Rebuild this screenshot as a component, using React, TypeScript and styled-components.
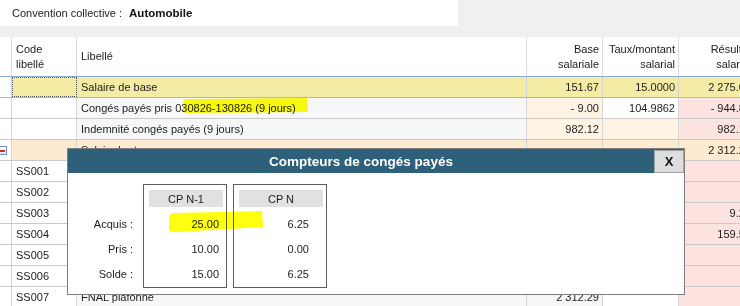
import styled, { createGlobalStyle } from 'styled-components';

const GlobalStyle = createGlobalStyle`
  html, body {
    margin: 0;
    padding: 0;
    background: #f0f0f0;
  }
  * {
    box-sizing: border-box;
  }
`;

const FONT = `"Liberation Sans", Arial, sans-serif`;
const COLS = '12px 65px 450px 76px 76px 76px';

const C = {
  white: '#ffffff',
  label: '#f7f7f7',
  selected: '#f4eca5',
  total: '#fdebd1',
  peach: '#fff4e3',
  pink: '#fde3df',
  light: '#f6f6f6',
};

type Row = {
  code?: string;
  label?: string;
  base?: string;
  taux?: string;
  res?: string;
  kind?: 'selected' | 'total';
  bg?: string[];
  toggle?: boolean;
};

const ssBg = [C.white, C.white, C.label, C.light, C.white, C.pink];

const rows: Row[] = [
  { label: 'Salaire de base', base: '151.67', taux: '15.0000', res: '2 275.05', kind: 'selected' },
  {
    label: 'Congés payés pris 030826-130826 (9 jours)',
    base: '- 9.00',
    taux: '104.9862',
    res: '- 944.88',
    bg: [C.white, C.white, C.label, C.peach, C.white, C.pink],
  },
  {
    label: 'Indemnité congés payés (9 jours)',
    base: '982.12',
    res: '982.12',
    bg: [C.white, C.white, C.label, C.peach, C.peach, C.pink],
  },
  { label: 'Salaire brut', res: '2 312.29', kind: 'total', toggle: true },
  { code: 'SS001', label: 'Sécurité sociale plafonnée', bg: ssBg },
  { code: 'SS002', label: 'Sécurité sociale déplafonnée', bg: ssBg },
  { code: 'SS003', label: 'Complémentaire santé', res: '9.25', bg: ssBg },
  { code: 'SS004', label: 'Retraite complémentaire', res: '159.54', bg: ssBg },
  { code: 'SS005', label: 'Prévoyance', bg: ssBg },
  { code: 'SS006', label: 'Assurance chômage', bg: ssBg },
  { code: 'SS007', label: 'FNAL plafonné', base: '2 312.29', bg: ssBg },
];

const Page = styled.div`
  position: relative;
  width: 740px;
  height: 306px;
  overflow: hidden;
  background: #f0f0f0;
  font-family: ${FONT};
  font-size: 11px;
  color: #1c1c1c;
`;

const TopBar = styled.div`
  width: 458px;
  height: 26px;
  background: #fff;
  display: flex;
  align-items: center;
  gap: 7px;
  padding-left: 12px;
`;

const ConvLabel = styled.span`
  color: #222;
`;

const ConvValue = styled.span`
  font-weight: bold;
  font-size: 11.5px;
  color: #111;
`;

const Table = styled.div`
  margin-top: 11px;
  width: 755px;
`;

const HeaderRow = styled.div`
  display: grid;
  grid-template-columns: ${COLS};
  height: 40px;
  background: #fff;
  border-bottom: 1px solid #8eaad6;
`;

const HeadCell = styled.div<{ $right?: boolean }>`
  display: flex;
  flex-direction: column;
  justify-content: center;
  align-items: ${p => (p.$right ? 'flex-end' : 'flex-start')};
  padding: 0 3px 0 4px;
  border-right: 1px solid #dcdcdc;
  line-height: 15px;
  white-space: nowrap;
`;

const BodyRow = styled.div<{ $kind?: string }>`
  display: grid;
  grid-template-columns: ${COLS};
  height: 21px;
  border-bottom: 1px solid ${p => (p.$kind === 'selected' ? '#a9b8cf' : '#cacaca')};
`;

const Cell = styled.div<{ $bg: string; $right?: boolean; $focus?: boolean }>`
  display: flex;
  align-items: center;
  justify-content: ${p => (p.$right ? 'flex-end' : 'flex-start')};
  padding: 0 3px 0 4px;
  background: ${p => p.$bg};
  border-right: 1px solid #d6d6d6;
  white-space: nowrap;
  overflow: hidden;
  outline: ${p => (p.$focus ? '1px dotted #555' : 'none')};
  outline-offset: -1px;
`;

const GutterCell = styled.div`
  display: flex;
  align-items: center;
  background: #fff;
  border-right: 1px solid #d6d6d6;
  overflow: hidden;
`;

const Toggle = styled.span`
  flex: none;
  position: relative;
  width: 9px;
  height: 9px;
  margin-left: -2px;
  border: 1px solid #6e8fc6;
  background: linear-gradient(#ffffff, #dfe6f2);

  &::after {
    content: '';
    position: absolute;
    left: 1px;
    right: 1px;
    top: 3px;
    height: 2px;
    background: #d8262a;
  }
`;

const Dialog = styled.div`
  position: absolute;
  left: 67px;
  top: 148px;
  width: 618px;
  height: 147px;
  background: #fff;
  border: 1px solid #7d7d7d;
  display: flex;
  flex-direction: column;
`;

const TitleBar = styled.div`
  height: 24px;
  background: #2e6079;
  display: flex;
  align-items: center;
`;

const Title = styled.div`
  flex: 1;
  text-align: center;
  color: #fff;
  font-weight: bold;
  font-size: 13.5px;
`;

const CloseButton = styled.button`
  width: 30px;
  height: 23px;
  padding: 0;
  background: #dedede;
  border: 1px solid #a3a3a3;
  font-family: ${FONT};
  font-weight: bold;
  font-size: 13px;
  color: #111;
`;

const DialogBody = styled.div`
  display: flex;
  align-items: flex-start;
  padding-top: 11px;
`;

const LabelColumn = styled.div`
  width: 65px;
  padding-top: 27px;
  margin-right: 10px;
  display: flex;
  flex-direction: column;
  align-items: flex-end;
`;

const CounterLine = styled.div`
  height: 25px;
  display: flex;
  align-items: center;
  white-space: nowrap;
`;

const CounterBox = styled.div<{ $width: number }>`
  width: ${p => p.$width}px;
  border: 1px solid #5c5c5c;
  padding: 5px 3px 1px 5px;
  margin-right: 6px;
`;

const CounterHead = styled.div`
  height: 17px;
  background: #e1e1e1;
  display: flex;
  align-items: center;
  justify-content: center;
  margin-bottom: 4px;
`;

const CounterValue = styled(CounterLine)`
  width: 70px;
  justify-content: flex-end;
`;

const Marker = styled.svg`
  position: absolute;
  left: 0;
  top: 0;
  pointer-events: none;
  mix-blend-mode: multiply;
`;

const counters = [
  { title: 'CP N-1', width: 84, values: ['25.00', '10.00', '15.00'] },
  { title: 'CP N', width: 94, values: ['6.25', '0.00', '6.25'] },
];

export default function App() {
  return (
    <Page>
      <GlobalStyle />
      <TopBar>
        <ConvLabel>Convention collective :</ConvLabel>
        <ConvValue>Automobile</ConvValue>
      </TopBar>

      <Table>
        <HeaderRow>
          <HeadCell />
          <HeadCell>
            <span>Code</span>
            <span>libellé</span>
          </HeadCell>
          <HeadCell>Libellé</HeadCell>
          <HeadCell $right>
            <span>Base</span>
            <span>salariale</span>
          </HeadCell>
          <HeadCell $right>
            <span>Taux/montant</span>
            <span>salarial</span>
          </HeadCell>
          <HeadCell $right>
            <span>Résultat</span>
            <span>salarial</span>
          </HeadCell>
        </HeaderRow>

        {rows.map((r, i) => {
          const fill =
            r.kind === 'selected'
              ? Array(6).fill(C.selected)
              : r.kind === 'total'
                ? Array(6).fill(C.total)
                : r.bg!;
          return (
            <BodyRow key={i} $kind={r.kind}>
              <GutterCell>{r.toggle && <Toggle />}</GutterCell>
              <Cell $bg={fill[1]} $focus={r.kind === 'selected'}>{r.code}</Cell>
              <Cell $bg={fill[2]}>{r.label}</Cell>
              <Cell $bg={fill[3]} $right>{r.base}</Cell>
              <Cell $bg={fill[4]} $right>{r.taux}</Cell>
              <Cell $bg={fill[5]} $right>{r.res}</Cell>
            </BodyRow>
          );
        })}
      </Table>

      <Dialog>
        <TitleBar>
          <Title>Compteurs de congés payés</Title>
          <CloseButton>X</CloseButton>
        </TitleBar>
        <DialogBody>
          <LabelColumn>
            <CounterLine>Acquis :</CounterLine>
            <CounterLine>Pris :</CounterLine>
            <CounterLine>Solde :</CounterLine>
          </LabelColumn>
          {counters.map(c => (
            <CounterBox key={c.title} $width={c.width}>
              <CounterHead>{c.title}</CounterHead>
              {c.values.map((v, j) => (
                <CounterValue key={j}>{v}</CounterValue>
              ))}
            </CounterBox>
          ))}
        </DialogBody>
      </Dialog>

      <Marker width={740} height={306} viewBox="0 0 740 306">
        <path
          d="M183 102 Q184 99 188 99 L307 98 L308 112 L187 113 Q183 113 183 109 Z"
          fill="#ffff10"
        />
        <path
          d="M169 219 Q169 214 173 213 L262 211 L263 227 L176 232 Q170 233 169 229 Z"
          fill="#ffff10"
        />
      </Marker>
    </Page>
  );
}
